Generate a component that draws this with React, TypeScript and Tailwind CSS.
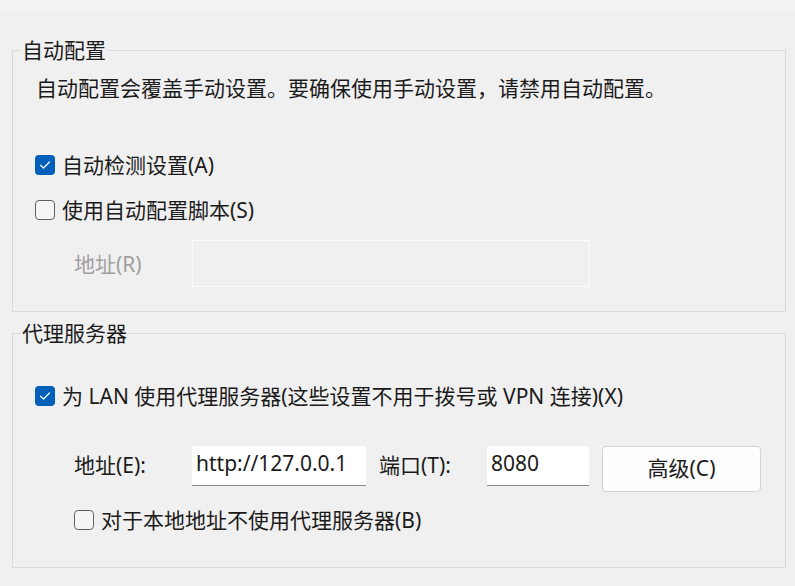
import React from 'react';

const font = { fontFamily: '"Noto Sans", "Noto Sans CJK SC", sans-serif' };

const CheckBox = ({ checked, label }: { checked?: boolean; label: string }) => (
  <div className="flex items-center h-[28px]">
    {checked ? (
      <div className="w-[20px] h-[20px] rounded-[4px] bg-[#005fb8] flex items-center justify-center">
        <svg width="12" height="10" viewBox="0 0 12 10" fill="none">
          <path d="M1.5 5.2 L4.5 8 L10.5 2" stroke="white" strokeWidth="1.2" strokeLinecap="round" strokeLinejoin="round" />
        </svg>
      </div>
    ) : (
      <div className="w-[20px] h-[20px] rounded-[4px] border border-[#5f5f5f] bg-[#f5f5f5]" />
    )}
    <span className="ml-[7px] text-[21px] leading-[28px] text-[#1b1b1b]">{label}</span>
  </div>
);

const Field = ({ title, children }: { title: string; children: React.ReactNode }) => (
  <fieldset className="ml-[12px] w-[774px] border border-[#d9d9d9] p-0">
    <legend className="ml-[8px] px-[1px] text-[21px] leading-[26px] text-[#1b1b1b]">{title}</legend>
    {children}
  </fieldset>
);

export default function App() {
  return (
    <div className="w-[795px] h-[586px] bg-[#f0f0f0] overflow-hidden" style={font}>
      <div className="h-[11px] bg-[#f3f3f3]" />

      <div className="mt-[26px]">
        <Field title="自动配置">
          <div className="pl-[22px] pb-[24px]">
            <p className="mt-[11px] text-[21px] leading-[28px] text-[#1b1b1b] pl-[1px]">
              自动配置会覆盖手动设置。要确保使用手动设置，请禁用自动配置。
            </p>
            <div className="mt-[49px]">
              <CheckBox checked label="自动检测设置(A)" />
            </div>
            <div className="mt-[17px]">
              <CheckBox label="使用自动配置脚本(S)" />
            </div>
            <div className="mt-[16px] flex items-center">
              <span className="ml-[39px] w-[118px] text-[21px] leading-[28px] text-[#a0a0a0]">地址(R)</span>
              <div className="w-[398px] h-[47px] border border-[#fbfbfb]" />
            </div>
          </div>
        </Field>
      </div>

      <div className="mt-[8px]">
        <Field title="代理服务器">
          <div className="pl-[22px] pb-[33px]">
            <div className="mt-[36px]">
              <CheckBox checked label="为 LAN 使用代理服务器(这些设置不用于拨号或 VPN 连接)(X)" />
            </div>
            <div className="mt-[36px] flex items-start pl-[39px]">
              <span className="w-[118px] h-[40px] flex items-center text-[21px] text-[#1b1b1b]">地址(E):</span>
              <div className="w-[174px] h-[40px] bg-white border-b border-[#868686] rounded-t-[2px] pl-[4px] pt-[3px] text-[21px] leading-[28px] text-[#1b1b1b]">
                http://127.0.0.1
              </div>
              <span className="ml-[13px] w-[108px] h-[40px] flex items-center text-[21px] text-[#1b1b1b]">端口(T):</span>
              <div className="w-[102px] h-[40px] bg-white border-b border-[#868686] rounded-t-[2px] pl-[4px] pt-[3px] text-[21px] leading-[28px] text-[#1b1b1b]">
                8080
              </div>
              <button className="ml-[13px] w-[159px] h-[46px] bg-[#fdfdfd] border border-[#d3d3d3] rounded-[4px] text-[21px] text-[#1b1b1b] flex items-center justify-center">
                高级(C)
              </button>
            </div>
            <div className="mt-[14px] pl-[39px]">
              <CheckBox label="对于本地地址不使用代理服务器(B)" />
            </div>
          </div>
        </Field>
      </div>
    </div>
  );
}
